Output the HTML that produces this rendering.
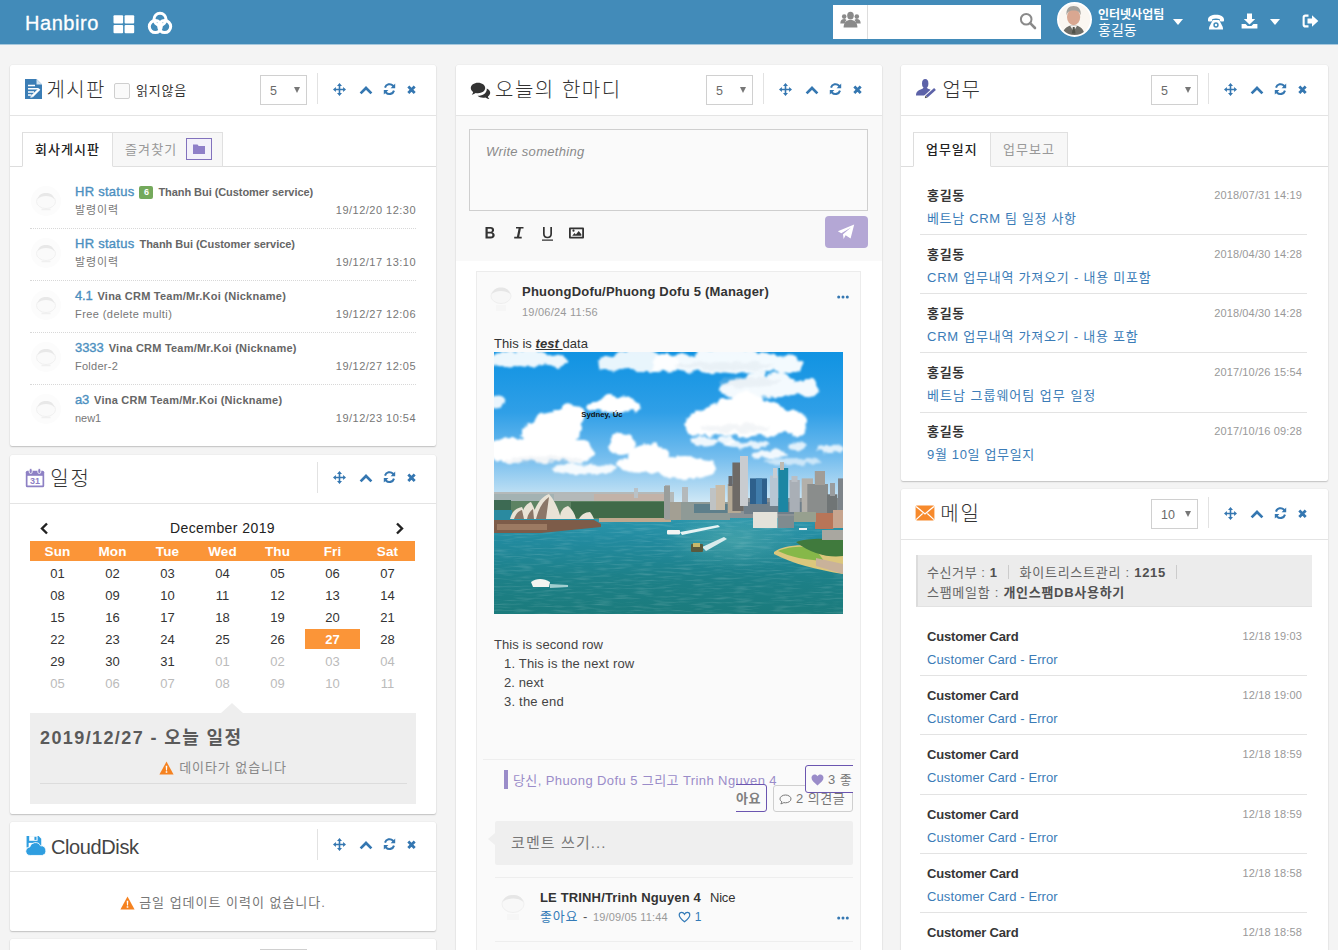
<!DOCTYPE html>
<html lang="ko">
<head>
<meta charset="utf-8">
<title>Hanbiro</title>
<style>
*{box-sizing:border-box;margin:0;padding:0}
html,body{width:1338px;height:950px;overflow:hidden;background:#f4f4f4}
body{font-family:"Liberation Sans","Noto Sans CJK KR",sans-serif;font-size:13px;color:#333;position:relative}
svg{display:block}
.abs{position:absolute}
#hdr{position:absolute;left:0;top:0;width:1338px;height:45px;background:#428bb9;border-bottom:1px solid #a6c8dd}
#hdr .brand{position:absolute;left:25px;top:10px;font-size:20px;color:#fff;letter-spacing:.55px;line-height:26px;-webkit-text-stroke:.3px #fff}
.card{position:absolute;background:#fff;border-radius:2px;box-shadow:0 1px 1.500px rgba(0,0,0,.2),0 0 0 .5px rgba(0,0,0,.03);overflow:hidden}
.chead{position:absolute;left:0;top:0;right:0;height:51px;border-bottom:1px solid #e4e4e4}
.ctitle{position:absolute;left:38px;top:9px;font-size:20px;line-height:30px;font-weight:300;color:#333;white-space:nowrap}
.sel{position:absolute;left:250px;top:10px;width:47px;height:30px;border:1px solid #d0d0d0;background:#fff;font-size:12.500px;color:#6a6a6a;line-height:31px;padding-left:9px}
.sel:after{content:"";position:absolute;right:6px;top:11px;border:3.500px solid transparent;border-top:6px solid #777;border-bottom:0}
.vdiv{position:absolute;left:307px;top:8px;width:1px;height:31px;background:#e2e2e2}
.tools{position:absolute;left:321px;top:17px}
.tabs{position:absolute;left:12px;top:67px;height:35px;display:flex}
.tabline{position:absolute;left:0;right:0;top:101px;height:1px;background:#ddd}
.tab{height:35px;border:1px solid #e0e0e0;border-left:0;background:#f7f7f7;color:#999;font-size:13px;line-height:33px;padding:0 12px;white-space:nowrap;position:relative}
.tab:first-child{border-left:1px solid #ddd}
.tab.on{background:#fff;color:#222;border-bottom-color:#fff;font-weight:500;z-index:2}
.av{position:absolute;left:1px;top:9px}
.brow{position:absolute;left:20px;width:386px;height:52px;border-bottom:1px dotted #d8d8d8}
.brow:last-child{border-bottom:0}
.bt{position:absolute;left:45px;top:6px;white-space:nowrap;line-height:18px}
.btt{font-size:13px;color:#4b8fc0;font-weight:400;-webkit-text-stroke:.35px #4b8fc0}
.bn{font-size:11px;font-weight:700;color:#666;margin-left:5px}
.bdg{display:inline-block;background:#74a95c;color:#fff;font-size:9px;font-weight:700;line-height:13px;height:13px;min-width:14px;text-align:center;border-radius:2px;margin-left:5px;vertical-align:1px}
.bs{position:absolute;left:45px;top:25px;font-size:11px;color:#777;line-height:16px;white-space:nowrap}
.bd{position:absolute;right:0;top:25px;font-size:11px;color:#777;line-height:16px;font-weight:500}
.fbtn{position:absolute;right:10px;top:5px;width:26px;height:22px;border:1px solid #8272bd;background:#f3f1fa;display:flex;align-items:center;justify-content:center}
.calttl{font-size:14px;line-height:18px;font-weight:500;color:#222;letter-spacing:.2px}
.cth{position:absolute;top:22px;width:55px;height:20px;line-height:22px;text-align:center;color:#fff;font-weight:700;font-size:13.500px;letter-spacing:.1px}
.cd{position:absolute;width:55px;height:20px;line-height:22px;text-align:center;font-size:13px;color:#333}
.cd.off{color:#bbb}
.cd.cur{background:#fb9538;color:#fff;font-weight:700}
.wi{position:absolute;left:19px;width:388px;height:59px;margin-top:.7px}
.wn{position:absolute;left:7px;top:10px;font-size:13px;line-height:20px;font-weight:700;color:#363636;white-space:nowrap}
.wd{position:absolute;right:6px;top:9px;font-size:11px;line-height:20px;color:#999;white-space:nowrap}
.wl{position:absolute;left:7px;top:33px;font-size:13px;line-height:20px;color:#3b7cb7;white-space:nowrap}
.wsep{position:absolute;left:19px;width:387px;height:1px;background:#e3e3e3}
.minfo{font-size:13px;line-height:18px;color:#666;white-space:nowrap}
.minfo b{color:#505050}
.msep{display:inline-block;width:1px;height:14px;background:#ccc;margin:0 11px 0 10px;vertical-align:-2px}
.ptxt{font-size:13px;line-height:20px;color:#444;white-space:nowrap;letter-spacing:.25px}

</style>
</head>
<body>
<div id="hdr">
  <div class="brand">Hanbiro</div>
  <svg class="abs" style="left:113px;top:15px" width="22" height="19" viewBox="0 0 22 19"><g fill="#fff"><rect x="0.5" y="0.3" width="9.6" height="8.2" rx="1"/><rect x="11.6" y="0.3" width="9.6" height="8.2" rx="1"/><rect x="0.5" y="10" width="9.6" height="8.2" rx="1"/><rect x="11.6" y="10" width="9.6" height="8.2" rx="1"/></g></svg>
  <svg class="abs" style="left:147px;top:11px" width="26" height="24" viewBox="0 0 26 24"><g fill="none" stroke="#fff" stroke-width="3"><circle cx="13" cy="8.2" r="6"/><circle cx="8.3" cy="15.6" r="6"/><circle cx="17.7" cy="15.6" r="6"/></g></svg>
  <div class="abs" style="left:833px;top:5px;width:208px;height:34px;background:#fff"></div>
  <div class="abs" style="left:867px;top:5px;width:1px;height:34px;background:#ddd"></div>
  <svg class="abs" style="left:840px;top:11px" width="21" height="17" viewBox="0 0 21 17"><g fill="#8a8a8a"><circle cx="4.2" cy="5.6" r="2.3"/><path d="M0.3 12.5c0-3 1.6-4.4 3.9-4.4 1 0 1.8.3 2.4.8-1 .9-1.6 2.2-1.8 3.6z"/><circle cx="16.8" cy="5.6" r="2.3"/><path d="M20.7 12.5c0-3-1.6-4.4-3.9-4.400-1 0-1.800.3-2.400.8 1 .9 1.600 2.200 1.800 3.600z"/><ellipse cx="10.500" cy="4.600" rx="3.300" ry="3.900"/><path d="M3.600 16.500c0-5 2.800-7.400 6.900-7.400s6.900 2.400 6.900 7.400z"/></g></svg>
  <svg class="abs" style="left:1019px;top:12px" width="18" height="18" viewBox="0 0 18 18"><circle cx="7.200" cy="7.200" r="5.300" fill="none" stroke="#8a8a8a" stroke-width="2"/><path d="M11.200 11.200L16 16" stroke="#8a8a8a" stroke-width="2.600" stroke-linecap="round"/></svg>
  <div class="abs" id="avatar" style="left:1057px;top:2px;width:35px;height:35px;border-radius:50%;border:2px solid #fff;background:#f8f4ee;overflow:hidden">
    <svg width="31" height="31" viewBox="0 0 31 31"><rect width="31" height="31" fill="#faf6f1"/><path d="M3.500 31c.5-5.500 4-8.500 8-9.500h6c4 1 7.500 4 8 9.500z" fill="#6f6e68"/><path d="M11 21.500l3.600 6 3.600-6z" fill="#f4f0ee"/><path d="M13.800 23h1.800l.9 6.500h-3.600z" fill="#50524a"/><ellipse cx="14.600" cy="13" rx="6.600" ry="8.300" fill="#d9a791"/><path d="M7.600 11.500c-.9-6.500 2.400-9.500 7-9.500s7.900 3 7 9.500c-.8-3.300-2.300-5-7-5s-6.200 1.700-7 5z" fill="#a3a19c"/></svg>
  </div>
  <div class="abs" style="left:1098px;top:8px;font-size:12px;line-height:15px;font-weight:700;color:#fff;white-space:nowrap">인터넷사업팀</div>
  <div class="abs" style="left:1098px;top:21px;font-size:14px;line-height:18px;font-weight:400;color:#fff;white-space:nowrap">홍길동</div>
  <div class="abs" style="left:1173px;top:19px;border:5px solid transparent;border-top:6px solid #fff;border-bottom:0"></div>
  <svg class="abs" style="left:1207px;top:14px" width="18" height="16" viewBox="0 0 18 16"><g fill="#fff"><path d="M1 5.500C1 2.500 4.500.8 9 .8s8 1.700 8 4.700v1.200c0 .5-.4.800-.9.800h-2.300c-.5 0-.9-.3-.9-.8V5.200C11.800 4.800 10.500 4.600 9 4.600s-2.800.2-3.900.6v1.500c0 .5-.4.800-.9.800H1.900c-.5 0-.9-.3-.9-.8z"/><path d="M5.800 6h6.400l3.300 6.500c.4.800.5 1.500.5 2.500v.5H2V15c0-1 .1-1.700.5-2.500z"/></g><circle cx="9" cy="11" r="2.700" fill="#428bb9"/><circle cx="9" cy="11" r="1.200" fill="#fff"/></svg>
  <svg class="abs" style="left:1241px;top:13px" width="17" height="16" viewBox="0 0 17 16"><g fill="#fff"><path d="M6 .5h5v5.500h3.200L8.500 11.500 2.800 6H6z"/><path d="M.6 11h4l2 2h3.800l2-2h4v4.500H.6z"/></g></svg>
  <div class="abs" style="left:1270px;top:19px;border:5px solid transparent;border-top:6px solid #fff;border-bottom:0"></div>
  <svg class="abs" style="left:1302px;top:13px" width="17" height="16" viewBox="0 0 17 16"><g fill="#fff"><path d="M6.500 1.500v2.200H3.700c-.6 0-1 .4-1 1v6.600c0 .6.400 1 1 1h2.800v2.200H3.200C1.700 14.500.6 13.400.6 11.900V4.100C.6 2.600 1.700 1.500 3.200 1.500z"/><path d="M10 2.300L16.300 8 10 13.700V10.400H5.500V5.600H10z"/></g></svg>
</div>
<div class="card" style="left:10px;top:65px;width:426px;height:381px">
<div class="chead" style="height:51px"><svg class="abs" style="left:15px;top:14px" width="17" height="20" viewBox="0 0 17 20"><path d="M0 0h11.500L17 5.500V20H0z" fill="#3b7db5"/><path d="M11.500 0v5.500H17z" fill="#d4e3f0"/><g stroke="#fff" stroke-width="1.500" fill="none"><path d="M3 6.500h7M3 9.700h10.500M3 12.900h6M3 16.100h3.500"/><path d="M7 17.300l7.500-7.300" stroke-width="2.400"/></g><path d="M5.300 18.800l.6-2.400 1.800 1.800z" fill="#fff"/></svg><div class="ctitle" style="left:36.6px;top:10px;"><span id="t_ttlA" style="letter-spacing:1.250px;">게시판</span></div><div class="abs" style="left:104px;top:18px;width:16px;height:16px;border:1px solid #cfcfcf;background:#fafafa;border-radius:2px"></div><div class="abs" style="left:126px;top:16px;font-size:13px;line-height:20px;color:#333;white-space:nowrap"><span id="t_unread" style="letter-spacing:0.785px;">읽지않음</span></div><div class="sel">5</div><div class="vdiv" style="top:8px"></div><svg class="abs" style="left:321px;top:17px" width="100" height="18" viewBox="0 0 100 18"><g fill="#3577b1" stroke="none">
<path d="M8.500 1l2.500 2.900H9.300v2.800h2.800V5l2.900 2.500-2.900 2.500V8.300H9.300v2.800H11l-2.500 2.900L6 11.100h1.700V8.300H4.900V10L2 7.500 4.900 5v1.700h2.800V3.900H6z"/>
<path d="M29.600 11.400L35 6l5.400 5.400" fill="none" stroke="#3577b1" stroke-width="2.700"/>
<path d="M64.200 1.600v4.600h-4.600l1.700-1.700a3.700 3.700 0 0 0-6.300 1.400l-2-.6a5.800 5.800 0 0 1 9.800-2.300zM52.800 12.600V8h4.600l-1.700 1.700a3.700 3.700 0 0 0 6.300-1.400l2 .6a5.800 5.800 0 0 1-9.800 2.300z"/>
<path d="M77.300 4.600l6.400 6.400M83.700 4.600l-6.400 6.400" fill="none" stroke="#3577b1" stroke-width="2.800"/>
</g></svg></div>
<div class="tabline"></div>
<div class="tabs"><div class="tab on" style="width:91px"><span id="t_tabA1" style="letter-spacing:1.047px;">회사게시판</span></div><div class="tab" style="width:110px"><span id="t_tabA2" style="letter-spacing:1.116px;">즐겨찾기</span><span class="fbtn"><svg width="14" height="12" viewBox="0 0 14 12"><path d="M1 1.500h4.500l1.200 1.500H13v8H1z" fill="#8f7fc8"/></svg></span></div></div>
<div class="brow" style="top:112px"><svg class="av" width="30" height="30" viewBox="0 0 30 30"><circle cx="15" cy="15" r="15" fill="#fcfcfc"/><ellipse cx="15" cy="15.500" rx="9.500" ry="7" fill="#fafafa" stroke="#f1f1f1" stroke-width="1"/><path d="M6.500 13c1.500-4.500 4.500-6 8.500-6s7 1.500 8.500 6c-2.500-2-5-3-8.500-3s-6 1-8.500 3z" fill="#e8e8e8"/><path d="M10.500 23.500h9" stroke="#f0f0f0" stroke-width="1.500"/></svg><div class="bt"><span class="btt"><span id="t_bt0" style="letter-spacing:0.265px;">HR status</span></span><span class="bdg">6</span><span class="bn"><span id="t_bn0" style="letter-spacing:-0.066px;">Thanh Bui (Customer service)</span></span></div><div class="bs"><span id="t_bs0" style="letter-spacing:0.902px;">발령이력</span></div><div class="bd"><span id="t_bd0" style="letter-spacing:0.484px;">19/12/20 12:30</span></div></div><div class="brow" style="top:164px"><svg class="av" width="30" height="30" viewBox="0 0 30 30"><circle cx="15" cy="15" r="15" fill="#fcfcfc"/><ellipse cx="15" cy="15.500" rx="9.500" ry="7" fill="#fafafa" stroke="#f1f1f1" stroke-width="1"/><path d="M6.500 13c1.500-4.500 4.500-6 8.500-6s7 1.500 8.500 6c-2.500-2-5-3-8.500-3s-6 1-8.500 3z" fill="#e8e8e8"/><path d="M10.500 23.500h9" stroke="#f0f0f0" stroke-width="1.500"/></svg><div class="bt"><span class="btt"><span id="t_bt1" style="letter-spacing:0.265px;">HR status</span></span><span class="bn"><span id="t_bn1" style="letter-spacing:-0.036px;">Thanh Bui (Customer service)</span></span></div><div class="bs"><span id="t_bs1" style="letter-spacing:0.902px;">발령이력</span></div><div class="bd"><span id="t_bd1" style="letter-spacing:0.484px;">19/12/17 13:10</span></div></div><div class="brow" style="top:216px"><svg class="av" width="30" height="30" viewBox="0 0 30 30"><circle cx="15" cy="15" r="15" fill="#fcfcfc"/><ellipse cx="15" cy="15.500" rx="9.500" ry="7" fill="#fafafa" stroke="#f1f1f1" stroke-width="1"/><path d="M6.500 13c1.500-4.500 4.500-6 8.500-6s7 1.500 8.500 6c-2.500-2-5-3-8.500-3s-6 1-8.500 3z" fill="#e8e8e8"/><path d="M10.500 23.500h9" stroke="#f0f0f0" stroke-width="1.500"/></svg><div class="bt"><span class="btt"><span id="t_bt2" style="letter-spacing:-0.200px;">4.1</span></span><span class="bn"><span id="t_bn2" style="letter-spacing:0.239px;">Vina CRM Team/Mr.Koi (Nickname)</span></span></div><div class="bs"><span id="t_bs2" style="letter-spacing:0.419px;">Free (delete multi)</span></div><div class="bd"><span id="t_bd2" style="letter-spacing:0.484px;">19/12/27 12:06</span></div></div><div class="brow" style="top:268px"><svg class="av" width="30" height="30" viewBox="0 0 30 30"><circle cx="15" cy="15" r="15" fill="#fcfcfc"/><ellipse cx="15" cy="15.500" rx="9.500" ry="7" fill="#fafafa" stroke="#f1f1f1" stroke-width="1"/><path d="M6.500 13c1.500-4.500 4.500-6 8.500-6s7 1.500 8.500 6c-2.500-2-5-3-8.500-3s-6 1-8.500 3z" fill="#e8e8e8"/><path d="M10.500 23.500h9" stroke="#f0f0f0" stroke-width="1.500"/></svg><div class="bt"><span class="btt"><span id="t_bt3" style="letter-spacing:-0.043px;">3333</span></span><span class="bn"><span id="t_bn3" style="letter-spacing:0.218px;">Vina CRM Team/Mr.Koi (Nickname)</span></span></div><div class="bs"><span id="t_bs3" style="letter-spacing:0.262px;">Folder-2</span></div><div class="bd"><span id="t_bd3" style="letter-spacing:0.484px;">19/12/27 12:05</span></div></div><div class="brow" style="top:320px"><svg class="av" width="30" height="30" viewBox="0 0 30 30"><circle cx="15" cy="15" r="15" fill="#fcfcfc"/><ellipse cx="15" cy="15.500" rx="9.500" ry="7" fill="#fafafa" stroke="#f1f1f1" stroke-width="1"/><path d="M6.500 13c1.500-4.500 4.500-6 8.500-6s7 1.500 8.500 6c-2.500-2-5-3-8.500-3s-6 1-8.500 3z" fill="#e8e8e8"/><path d="M10.500 23.500h9" stroke="#f0f0f0" stroke-width="1.500"/></svg><div class="bt"><span class="btt"><span id="t_bt4" style="letter-spacing:-0.200px;">a3</span></span><span class="bn"><span id="t_bn4" style="letter-spacing:0.229px;">Vina CRM Team/Mr.Koi (Nickname)</span></span></div><div class="bs"><span id="t_bs4" style="letter-spacing:-0.037px;">new1</span></div><div class="bd"><span id="t_bd4" style="letter-spacing:0.484px;">19/12/23 10:54</span></div></div>
</div>
<div class="card" style="left:10px;top:455px;width:426px;height:359px">
<div class="chead" style="height:49px"><svg class="abs" style="left:15px;top:13px" width="20" height="20" viewBox="0 0 20 20"><rect x=".8" y="2.800" width="18.400" height="16.400" rx="1.500" fill="#8d80c4"/><rect x="2.500" y="7.800" width="15" height="9.700" fill="#fff"/><rect x="4.200" y=".5" width="3" height="5" rx="1.500" fill="#8d80c4" stroke="#fff" stroke-width=".8"/><rect x="12.800" y=".5" width="3" height="5" rx="1.500" fill="#8d80c4" stroke="#fff" stroke-width=".8"/><text x="10" y="16.200" font-size="9" font-weight="700" fill="#8d80c4" text-anchor="middle" font-family="Liberation Sans, sans-serif">31</text></svg><div class="ctitle" style="left:40.3px;top:9px;"><span id="t_ttlB" style="letter-spacing:1.700px;">일정</span></div><div class="vdiv" style="top:7px"></div><svg class="abs" style="left:321px;top:15px" width="100" height="18" viewBox="0 0 100 18"><g fill="#3577b1" stroke="none">
<path d="M8.500 1l2.500 2.900H9.300v2.800h2.800V5l2.900 2.500-2.900 2.500V8.300H9.300v2.800H11l-2.500 2.900L6 11.100h1.700V8.300H4.900V10L2 7.500 4.900 5v1.700h2.800V3.900H6z"/>
<path d="M29.600 11.400L35 6l5.400 5.400" fill="none" stroke="#3577b1" stroke-width="2.700"/>
<path d="M64.200 1.600v4.600h-4.600l1.700-1.700a3.700 3.700 0 0 0-6.300 1.400l-2-.6a5.800 5.800 0 0 1 9.800-2.300zM52.800 12.600V8h4.600l-1.700 1.700a3.700 3.700 0 0 0 6.300-1.400l2 .6a5.800 5.800 0 0 1-9.800 2.300z"/>
<path d="M77.300 4.600l6.400 6.400M83.700 4.600l-6.400 6.400" fill="none" stroke="#3577b1" stroke-width="2.800"/>
</g></svg></div>
<div class="abs" style="left:20px;top:64px;width:385px;height:200px">
<svg class="abs" style="left:9px;top:3px" width="10" height="13" viewBox="0 0 10 13"><path d="M8 1.500L3 6.500l5 5" fill="none" stroke="#222" stroke-width="2.400"/></svg>
<svg class="abs" style="left:365px;top:3px" width="10" height="13" viewBox="0 0 10 13"><path d="M2 1.500l5 5-5 5" fill="none" stroke="#222" stroke-width="2.400"/></svg>
<div class="abs calttl" style="left:0;top:0;width:385px;text-align:center"><span id="t_calttl" style="letter-spacing:0.423px;">December 2019</span></div>
<div class="abs" style="left:0;top:22px;width:385px;height:20px;background:#fb9538"></div>
<div class="cth" style="left:0px">Sun</div><div class="cth" style="left:55px">Mon</div><div class="cth" style="left:110px">Tue</div><div class="cth" style="left:165px">Wed</div><div class="cth" style="left:220px">Thu</div><div class="cth" style="left:275px">Fri</div><div class="cth" style="left:330px">Sat</div>
<div class="cd" style="left:0px;top:44px">01</div><div class="cd" style="left:55px;top:44px">02</div><div class="cd" style="left:110px;top:44px">03</div><div class="cd" style="left:165px;top:44px">04</div><div class="cd" style="left:220px;top:44px">05</div><div class="cd" style="left:275px;top:44px">06</div><div class="cd" style="left:330px;top:44px">07</div><div class="cd" style="left:0px;top:66px">08</div><div class="cd" style="left:55px;top:66px">09</div><div class="cd" style="left:110px;top:66px">10</div><div class="cd" style="left:165px;top:66px">11</div><div class="cd" style="left:220px;top:66px">12</div><div class="cd" style="left:275px;top:66px">13</div><div class="cd" style="left:330px;top:66px">14</div><div class="cd" style="left:0px;top:88px">15</div><div class="cd" style="left:55px;top:88px">16</div><div class="cd" style="left:110px;top:88px">17</div><div class="cd" style="left:165px;top:88px">18</div><div class="cd" style="left:220px;top:88px">19</div><div class="cd" style="left:275px;top:88px">20</div><div class="cd" style="left:330px;top:88px">21</div><div class="cd" style="left:0px;top:110px">22</div><div class="cd" style="left:55px;top:110px">23</div><div class="cd" style="left:110px;top:110px">24</div><div class="cd" style="left:165px;top:110px">25</div><div class="cd" style="left:220px;top:110px">26</div><div class="cd cur" style="left:275px;top:110px">27</div><div class="cd" style="left:330px;top:110px">28</div><div class="cd" style="left:0px;top:132px">29</div><div class="cd" style="left:55px;top:132px">30</div><div class="cd" style="left:110px;top:132px">31</div><div class="cd off" style="left:165px;top:132px">01</div><div class="cd off" style="left:220px;top:132px">02</div><div class="cd off" style="left:275px;top:132px">03</div><div class="cd off" style="left:330px;top:132px">04</div><div class="cd off" style="left:0px;top:154px">05</div><div class="cd off" style="left:55px;top:154px">06</div><div class="cd off" style="left:110px;top:154px">07</div><div class="cd off" style="left:165px;top:154px">08</div><div class="cd off" style="left:220px;top:154px">09</div><div class="cd off" style="left:275px;top:154px">10</div><div class="cd off" style="left:330px;top:154px">11</div>
</div>
<svg class="abs" style="left:210px;top:248px" width="24" height="11" viewBox="0 0 24 11"><path d="M0 11L12 0l12 11z" fill="#eee"/></svg>
<div class="abs" style="left:20px;top:258px;width:386px;height:91px;background:#eee">
<div class="abs" style="left:10px;top:11px;font-size:18px;line-height:28px;font-weight:700;color:#5a5a5a;white-space:nowrap"><span id="t_caltoday" style="letter-spacing:1.400px;">2019/12/27 - 오늘 일정</span></div>
<div class="abs" style="left:0;top:45px;width:386px;text-align:center;font-size:13px;line-height:20px;color:#888;white-space:nowrap"><svg style="display:inline-block;vertical-align:-3px;margin-right:5px" width="15" height="14" viewBox="0 0 15 14"><path d="M7.500.6L14.600 13.400H.4z" fill="#f58220"/><path d="M6.700 4.800h1.600l-.3 4.700H7zM6.700 10.300h1.600v1.500H6.700z" fill="#fff"/></svg><span id="t_nodata" style="letter-spacing:0.925px;">데이타가 없습니다</span></div>
<div class="abs" style="left:10px;top:70px;width:367px;height:1px;background:#dcdcdc"></div>
</div>
</div>
<div class="card" style="left:10px;top:822px;width:426px;height:109px">
<div class="chead" style="height:50px"><svg class="abs" style="left:15px;top:13px" width="22" height="21" viewBox="0 0 21 20"><path d="M1.500 1h11.500l2.500 2.500V12H1.500z" fill="#2f9ee0"/><rect x="4" y="1" width="8" height="4.500" fill="#fff"/><rect x="9" y="1.700" width="2" height="3" fill="#2f9ee0"/><rect x="3.500" y="7.500" width="10" height="5" fill="#fff"/><path d="M5 19.500a4 4 0 0 1-.5-8 5.500 5.500 0 0 1 10.300-1.200 4.700 4.700 0 0 1 1.700 9.200z" fill="#2f9ee0" stroke="#fff" stroke-width=".8"/></svg><div class="ctitle" style="left:41px;top:9px;font-size:20px;color:#444;top:10px"><span id="t_ttlC" style="letter-spacing:-0.390px;">CloudDisk</span></div><div class="vdiv" style="top:7px"></div><svg class="abs" style="left:321px;top:15px" width="100" height="18" viewBox="0 0 100 18"><g fill="#3577b1" stroke="none">
<path d="M8.500 1l2.500 2.900H9.300v2.800h2.800V5l2.900 2.500-2.900 2.500V8.300H9.300v2.800H11l-2.500 2.900L6 11.100h1.700V8.300H4.900V10L2 7.500 4.900 5v1.700h2.800V3.900H6z"/>
<path d="M29.600 11.400L35 6l5.400 5.400" fill="none" stroke="#3577b1" stroke-width="2.700"/>
<path d="M64.200 1.600v4.600h-4.600l1.700-1.700a3.700 3.700 0 0 0-6.300 1.400l-2-.6a5.800 5.800 0 0 1 9.800-2.300zM52.800 12.600V8h4.600l-1.700 1.700a3.700 3.700 0 0 0 6.300-1.400l2 .6a5.800 5.800 0 0 1-9.800 2.300z"/>
<path d="M77.300 4.600l6.400 6.400M83.700 4.600l-6.400 6.400" fill="none" stroke="#3577b1" stroke-width="2.800"/>
</g></svg></div>
<div class="abs" style="left:0;top:71px;width:426px;text-align:center;font-size:13px;line-height:20px;color:#777;white-space:nowrap"><svg style="display:inline-block;vertical-align:-3px;margin-right:4px" width="15" height="14" viewBox="0 0 15 14"><path d="M7.500.6L14.600 13.400H.4z" fill="#f58220"/><path d="M6.700 4.800h1.600l-.3 4.700H7zM6.700 10.300h1.600v1.500H6.700z" fill="#fff"/></svg><span id="t_noupd" style="letter-spacing:0.985px;">금일 업데이트 이력이 없습니다.</span></div>
</div>
<div class="card" style="left:10px;top:939px;width:426px;height:60px"><div class="sel"></div></div>
<div class="card" style="left:456px;top:65px;width:425.500px;height:900px">
<div class="chead" style="height:51px"><svg class="abs" style="left:14px;top:17px" width="21" height="18" viewBox="0 0 21 18"><path d="M8 .8c4 0 7.200 2.300 7.200 5.200S12 11.200 8 11.200c-.8 0-1.600-.1-2.300-.3-1 .9-2.500 1.500-4 1.600.8-.7 1.300-1.600 1.500-2.600C1.800 9 .8 7.600.8 6 .8 3.100 4 .8 8 .8z" fill="#333"/><path d="M16.700 6.500c2 .8 3.500 2.400 3.500 4.300 0 1.500-.9 2.800-2.300 3.700.2 1 .7 1.900 1.500 2.600-1.500-.1-3-.7-4-1.600-.7.200-1.500.3-2.300.3-2.300 0-4.300-.8-5.600-2 .2 0 .4 0 .6 0 4.800 0 8.700-2.900 8.700-6.600 0-.2 0-.5-.1-.7z" fill="#333"/></svg><div class="ctitle" style="left:39px;top:10px;"><span id="t_ttlT" style="letter-spacing:1.530px;">오늘의 한마디</span></div><div class="sel">5</div><div class="vdiv" style="top:8px"></div><svg class="abs" style="left:321px;top:17px" width="100" height="18" viewBox="0 0 100 18"><g fill="#3577b1" stroke="none">
<path d="M8.500 1l2.500 2.900H9.300v2.800h2.800V5l2.900 2.500-2.900 2.500V8.300H9.300v2.800H11l-2.500 2.900L6 11.100h1.700V8.300H4.900V10L2 7.500 4.900 5v1.700h2.800V3.900H6z"/>
<path d="M29.600 11.400L35 6l5.400 5.400" fill="none" stroke="#3577b1" stroke-width="2.700"/>
<path d="M64.200 1.600v4.600h-4.600l1.700-1.700a3.700 3.700 0 0 0-6.300 1.400l-2-.6a5.800 5.800 0 0 1 9.800-2.300zM52.800 12.600V8h4.600l-1.700 1.700a3.700 3.700 0 0 0 6.300-1.400l2 .6a5.800 5.800 0 0 1-9.800 2.300z"/>
<path d="M77.300 4.600l6.400 6.400M83.700 4.600l-6.400 6.400" fill="none" stroke="#3577b1" stroke-width="2.800"/>
</g></svg></div>
<div class="abs" style="left:0;top:51px;width:426px;height:145px;background:#f9f9f9"></div>
<div class="abs" style="left:13px;top:64px;width:399px;height:82px;border:1px solid #cfcfcf;background:#fafafa"></div>
<div class="abs" style="left:30px;top:78px;font-size:13px;line-height:18px;font-style:italic;color:#8a8a8a;white-space:nowrap;letter-spacing:.15px"><span id="t_ws" style="letter-spacing:0.312px;">Write something</span></div>
<svg class="abs" style="left:28px;top:161px" width="100" height="15" viewBox="0 0 100 15"><g fill="#333">
<path d="M1.500 1h5c2.300 0 3.600 1.100 3.600 2.900 0 1.200-.6 2.100-1.700 2.500 1.400.3 2.300 1.300 2.300 2.800 0 2-1.500 3.200-3.900 3.200H1.500zm2.200 1.800v2.900h2.500c1.100 0 1.700-.5 1.700-1.500s-.6-1.400-1.700-1.400zm0 4.600v3.200h2.800c1.200 0 1.900-.6 1.900-1.600s-.7-1.600-1.900-1.600z"/>
<path d="M32 1h7.500v1.600h-2.600l-1.700 8.200h2.500v1.600h-7.500v-1.600h2.700l1.700-8.200H32z"/>
<path d="M59 1h1.700v6.800c0 1.900 1 2.900 2.800 2.900s2.800-1 2.800-2.900V1H68v6.900c0 2.800-1.700 4.400-4.500 4.400S59 10.700 59 7.900zM58 13.500h11v1.200H58z"/>
<path d="M86 1.500h13c.5 0 1 .5 1 1v9c0 .5-.5 1-1 1H86c-.5 0-1-.5-1-1v-9c0-.5.5-1 1-1zm.8 1.800v7.400h11.400V3.300zm1.400 6.400l2.300-2.600 1.400 1.400 2.800-3.500 2.600 3.300v1.400zm1.300-3.900a1.100 1.100 0 1 1 0-2.200 1.100 1.100 0 0 1 0 2.200z"/>
</g></svg>
<div class="abs" style="left:369px;top:151px;width:43px;height:32px;background:#b4a7d5;border-radius:4px"><svg class="abs" style="left:12px;top:8px" width="18" height="16" viewBox="0 0 18 16"><path d="M17.200.5L13.600 14.500 8.600 11.300 6.600 15 6 10.200 14 3.500 4.300 9.200.8 7.300z" fill="#fff"/></svg></div>
<div class="abs" style="left:20px;top:206px;width:385px;height:760px;border:1px solid #ececec;background:#fafafa">
<svg class="abs" style="left:12px;top:13px" width="24" height="32" viewBox="0 0 24 32"><ellipse cx="12" cy="11" rx="10" ry="7.500" fill="#f7f7f7" stroke="#efefef"/><path d="M2.500 9c2-5 5.500-6.500 9.500-6.500S19.500 4 21.500 9c-3-2-6-3-9.500-3s-6.500 1-9.500 3z" fill="#e6e6e6"/><rect x="7" y="20" width="10" height="6" fill="#f6f6f6"/></svg>
<div class="abs" style="left:45px;top:10px;font-size:13px;line-height:20px;font-weight:700;color:#333;white-space:nowrap;letter-spacing:.25px"><span id="t_pname" style="letter-spacing:0.211px;">PhuongDofu/Phuong Dofu 5 (Manager)</span></div>
<div class="abs" style="left:45px;top:31px;font-size:11px;line-height:18px;color:#999;white-space:nowrap"><span id="t_pdate" style="letter-spacing:0.239px;">19/06/24 11:56</span></div>
<svg class="abs" style="left:360px;top:23px" width="12" height="4" viewBox="0 0 12 4"><g fill="#3577b1"><circle cx="1.700" cy="2" r="1.500"/><circle cx="6" cy="2" r="1.500"/><circle cx="10.300" cy="2" r="1.500"/></g></svg>
<div class="abs" style="left:17px;top:62px;font-size:13px;line-height:20px;color:#333;white-space:nowrap;letter-spacing:.2px"><span id="t_ptest" style="letter-spacing:0.048px;">This is <i style="font-weight:700;text-decoration:underline">test </i>data</span></div>
<svg class="abs" style="left:17px;top:80px" width="349" height="262" viewBox="0 0 349 262">
<defs>
<linearGradient id="sky" x1="0" y1="0" x2="0" y2="1"><stop offset="0" stop-color="#1093e2"/><stop offset=".4" stop-color="#2f9fe7"/><stop offset=".7" stop-color="#74bdee"/><stop offset=".92" stop-color="#b7dcf3"/><stop offset="1" stop-color="#cfe8f6"/></linearGradient>
<linearGradient id="sea" x1="0" y1="0" x2="0" y2="1"><stop offset="0" stop-color="#2e9ab2"/><stop offset=".3" stop-color="#228a9e"/><stop offset=".65" stop-color="#1d8088"/><stop offset="1" stop-color="#1b7b7c"/></linearGradient>
<radialGradient id="glow" cx=".5" cy=".5" r=".5"><stop offset="0" stop-color="#5fb3b0" stop-opacity=".5"/><stop offset="1" stop-color="#5fb3b0" stop-opacity="0"/></radialGradient>
<filter id="bl" x="-10%" y="-10%" width="120%" height="120%"><feTurbulence type="fractalNoise" baseFrequency=".09" numOctaves="3" seed="4" result="n"/><feDisplacementMap in="SourceGraphic" in2="n" scale="9" xChannelSelector="R" yChannelSelector="G" result="d"/><feGaussianBlur in="d" stdDeviation="1.300"/></filter><filter id="wt" x="0" y="0" width="100%" height="100%"><feTurbulence type="fractalNoise" baseFrequency=".05 .5" numOctaves="2" seed="2"/><feColorMatrix type="matrix" values="0 0 0 0 1  0 0 0 0 1  0 0 0 0 1  .9 0 0 0 -.42"/></filter>
<filter id="bl2"><feGaussianBlur stdDeviation=".6"/></filter>
</defs>
<rect width="349" height="150" fill="url(#sky)"/>
<g fill="#fff" filter="url(#bl)"><g opacity="0.92"><ellipse cx="0.5" cy="9.0" rx="13.0" ry="5.6"/><ellipse cx="13.2" cy="7.2" rx="13.0" ry="7.6"/><ellipse cx="32.4" cy="5.0" rx="13.0" ry="10.0"/><ellipse cx="41.3" cy="7.2" rx="13.0" ry="7.6"/><ellipse cx="60.1" cy="9.0" rx="13.0" ry="5.6"/><ellipse cx="31.0" cy="9.6" rx="33.1" ry="4.8"/></g><g opacity="0.9"><ellipse cx="117.6" cy="11.4" rx="12.2" ry="7.3"/><ellipse cx="128.4" cy="9.1" rx="12.2" ry="9.9"/><ellipse cx="146.1" cy="6.3" rx="14.3" ry="13.0"/><ellipse cx="155.4" cy="9.1" rx="12.2" ry="9.9"/><ellipse cx="172.6" cy="11.4" rx="12.2" ry="7.3"/><ellipse cx="146.0" cy="12.3" rx="31.3" ry="6.2"/></g><g opacity="0.95"><ellipse cx="174.0" cy="12.4" rx="16.7" ry="8.4"/><ellipse cx="192.8" cy="11.1" rx="16.7" ry="9.9"/><ellipse cx="215.5" cy="8.8" rx="16.7" ry="12.4"/><ellipse cx="239.0" cy="6.5" rx="16.7" ry="15.0"/><ellipse cx="248.9" cy="8.8" rx="16.7" ry="12.4"/><ellipse cx="268.7" cy="11.1" rx="16.7" ry="9.9"/><ellipse cx="292.3" cy="12.4" rx="16.7" ry="8.4"/><ellipse cx="235.0" cy="13.4" rx="59.8" ry="7.2"/></g><g opacity="0.95"><ellipse cx="238.0" cy="36.9" rx="13.5" ry="7.8"/><ellipse cx="249.3" cy="35.2" rx="13.5" ry="9.8"/><ellipse cx="262.5" cy="32.7" rx="13.9" ry="12.6"/><ellipse cx="283.3" cy="32.7" rx="13.9" ry="12.6"/><ellipse cx="289.0" cy="35.2" rx="13.5" ry="9.8"/><ellipse cx="312.1" cy="36.9" rx="13.5" ry="7.8"/><ellipse cx="271.0" cy="37.8" rx="41.4" ry="6.7"/></g><g opacity="1"><ellipse cx="205.5" cy="70.9" rx="13.8" ry="12.3"/><ellipse cx="219.3" cy="69.0" rx="15.9" ry="14.5"/><ellipse cx="234.3" cy="65.6" rx="20.1" ry="18.2"/><ellipse cx="251.5" cy="62.2" rx="24.2" ry="22.0"/><ellipse cx="272.0" cy="65.6" rx="20.1" ry="18.2"/><ellipse cx="280.8" cy="69.0" rx="15.9" ry="14.5"/><ellipse cx="300.2" cy="70.9" rx="13.8" ry="12.3"/><ellipse cx="253.5" cy="72.3" rx="49.2" ry="10.6"/></g><g opacity="1"><ellipse cx="105.1" cy="54.2" rx="10.8" ry="5.3"/><ellipse cx="115.0" cy="51.7" rx="10.8" ry="8.1"/><ellipse cx="128.4" cy="51.7" rx="10.8" ry="8.1"/><ellipse cx="136.5" cy="54.2" rx="10.8" ry="5.3"/><ellipse cx="122.0" cy="54.8" rx="22.1" ry="4.6"/></g><g opacity="0.9"><ellipse cx="-1.5" cy="50.6" rx="10.8" ry="6.0"/><ellipse cx="2.0" cy="53.4" rx="5.5" ry="2.9"/></g><ellipse cx="18" cy="98" rx="24" ry="13"/><ellipse cx="50" cy="96" rx="30" ry="15"/><ellipse cx="82" cy="99" rx="18" ry="12"/><ellipse cx="62" cy="76" rx="26" ry="18"/><ellipse cx="78" cy="63" rx="13" ry="10"/><ellipse cx="42" cy="80" rx="13" ry="9"/><ellipse cx="128" cy="92" rx="13" ry="11"/><ellipse cx="155" cy="104" rx="20" ry="13"/><ellipse cx="192" cy="116" rx="30" ry="11"/><ellipse cx="152" cy="113" rx="30" ry="8"/><ellipse cx="90" cy="117" rx="33" ry="5.500" opacity=".92"/><g opacity="0.9"><ellipse cx="209.6" cy="89.0" rx="13.5" ry="5.5"/><ellipse cx="212.5" cy="91.6" rx="6.9" ry="2.6"/></g><g opacity="0.9"><ellipse cx="232.8" cy="89.5" rx="9.9" ry="5.0"/><ellipse cx="231.5" cy="91.8" rx="5.1" ry="2.4"/></g><g opacity="0.85"><ellipse cx="246.0" cy="92.8" rx="14.0" ry="3.5"/><ellipse cx="260.3" cy="92.8" rx="14.0" ry="3.5"/><ellipse cx="254.5" cy="93.8" rx="14.3" ry="2.4"/></g><g opacity="0.9"><ellipse cx="269.2" cy="102.5" rx="11.7" ry="3.8"/><ellipse cx="281.1" cy="102.5" rx="11.7" ry="3.8"/><ellipse cx="275.0" cy="103.6" rx="12.0" ry="2.6"/></g><g opacity="0.8"><ellipse cx="304.0" cy="94.8" rx="9.9" ry="3.5"/><ellipse cx="305.5" cy="96.5" rx="5.1" ry="1.7"/></g><g opacity="0.8"><ellipse cx="331.0" cy="97.5" rx="9.0" ry="2.8"/><ellipse cx="340.3" cy="97.5" rx="9.0" ry="2.8"/><ellipse cx="334.0" cy="98.2" rx="9.2" ry="1.9"/></g><g opacity="0.6"><ellipse cx="286.3" cy="109.5" rx="17.1" ry="2.8"/><ellipse cx="309.4" cy="109.5" rx="17.1" ry="2.8"/><ellipse cx="299.0" cy="110.2" rx="17.5" ry="1.9"/></g></g>
<g fill="#c9d3dd" opacity=".22" filter="url(#bl)"><ellipse cx="255" cy="30" rx="30" ry="6"/><ellipse cx="240" cy="76" rx="35" ry="4"/><ellipse cx="50" cy="108" rx="40" ry="3.500"/><ellipse cx="230" cy="14" rx="50" ry="4"/></g>
<rect y="158" width="349" height="104" fill="url(#sea)"/>
<ellipse cx="240" cy="188" rx="75" ry="30" fill="url(#glow)"/>
<rect y="168" width="349" height="94" filter="url(#wt)" opacity=".38"/>
<g filter="url(#bl2)">
<rect x="0" y="140" width="180" height="11" fill="#b4b9b9"/>
<rect x="0" y="142" width="60" height="10" fill="#a3b2b3"/>
<rect x="100" y="142" width="75" height="8" fill="#c2b2a8"/>
<rect x="0" y="149" width="176" height="18" fill="#5d8364"/>
<rect x="77" y="150" width="94" height="16" fill="#3f6b4a"/>
<rect x="0" y="148" width="17" height="12" fill="#3c6a52"/>
<rect x="0" y="158" width="18" height="20" fill="#2b8aa0"/>
<rect x="105" y="166" width="72" height="4" fill="#bfa98f"/>
<rect x="176" y="150" width="60" height="18" fill="#8f9a96"/>
<rect x="236" y="146" width="113" height="20" fill="#8b9296"/>
<rect x="250" y="150" width="60" height="12" fill="#6f7f8a"/>
<rect x="171" y="150" width="16" height="18" fill="#a39f93"/>
<rect x="200" y="152" width="40" height="9" fill="#5d7f8b"/>
<rect x="171" y="133" width="5" height="13" fill="#a9b3b9"/><rect x="170" y="134" width="6" height="33" fill="#9a9e9c"/><rect x="140" y="136" width="4" height="10" fill="#b9c2c8"/><rect x="188" y="135" width="6" height="15" fill="#b4b9bb"/><rect x="221.5" y="133" width="9.5" height="25" fill="#c9bca8"/><rect x="216" y="136" width="6" height="22" fill="#bfc3c4"/><rect x="233.7" y="132" width="13.1" height="29" fill="#b5a995"/><rect x="238.4" y="110.5" width="11.2" height="48.5" fill="#6e6a66"/><rect x="246" y="104" width="8" height="50" fill="#c9ccd0"/><rect x="234.5" y="124" width="4.0" height="10" fill="#66686c"/><rect x="256" y="126.4" width="17" height="25.6" fill="#2f618c"/><rect x="262" y="126.4" width="6" height="25.6" fill="#3f7cab"/><rect x="275.9" y="123.6" width="8.4" height="30.4" fill="#b7c6d3"/><rect x="279" y="116" width="4" height="10" fill="#c8cdd2"/><rect x="284.3" y="116" width="9.9" height="44" fill="#1f86a3"/><rect x="286" y="110" width="4" height="8" fill="#bdbab2"/><rect x="295.5" y="128" width="10.3" height="32" fill="#a9afb6"/><rect x="297.5" y="124" width="6.0" height="6" fill="#b9bec4"/><rect x="307.7" y="126.4" width="11.3" height="33.6" fill="#b3b0aa"/><rect x="313.3" y="132" width="20.7" height="29" fill="#8a8d8c"/><rect x="320.8" y="119" width="10.2" height="14" fill="#a19d97"/><rect x="333" y="142.3" width="10.3" height="19.7" fill="#6f7476"/><rect x="336" y="131" width="5" height="13" fill="#9a9d9f"/><rect x="344" y="126.4" width="5" height="31.6" fill="#7d848a"/><rect x="259" y="160" width="24.4" height="16" fill="#e4e2da"/><rect x="284" y="164" width="16" height="12" fill="#7f8b8f"/><rect x="321" y="161" width="18.5" height="16" fill="#b87458"/><rect x="339" y="158" width="10" height="18" fill="#c7a58f"/><rect x="300" y="160" width="22" height="10" fill="#97a08f"/>
<path d="M0 168h100l7 4v3l-60 6H0z" fill="#7d5b49"/>
<path d="M3 172h50v6H3z" fill="#9c7a62"/>
<path d="M16 167c2-8 6-11 12-12 2 4 3 8 4 12zM27 167c1-10 5-15 10-17 3 5 5 11 6 17zM38 167c3-14 9-22 17-25 6 7 10 16 12 25zM66 167c0-7 2-11 8-13 4 3 7 8 8 13zM85 167c2-4 6-7 11-7 2 2 3 5 4 7z" fill="#e9e3d6"/>
<path d="M20 167c2-5 4-8 8-9l2 9zM42 167c3-11 7-18 13-22l-3 22zM33 167c1-5 3-8 6-10l1 10z" fill="#8b7768"/>
<path d="M280 200c8-6 22-8 42-6l27 6v22c-25-4-50-10-69-20z" fill="#dcc77c"/>
<path d="M284 199c8-4 20-5 36-4l10 14c-18-1-34-4-46-10z" fill="#86b84a"/>
<path d="M302 190c10-4 30-4 47-2v16c-14 2-32-2-47-14z" fill="#3f7a3e"/>
<rect x="328" y="178" width="21" height="10" fill="#a9a7a0"/>
<path d="M322 206l27 6v10l-27-8z" fill="#c9b29a"/>
</g>
<g filter="url(#bl2)"><path d="M186 180l38-7 2 2-38 8z" fill="#e6f3f4"/><rect x="173" y="178" width="13" height="4.500" rx="1" fill="#f2f4f3"/>
<path d="M208 195l22-10 3 2-21 12z" fill="#d9ecec"/><rect x="197" y="192" width="12" height="8" rx="1" fill="#5a5a3e"/><rect x="199" y="191" width="7" height="4" fill="#c9b86a"/>
<path d="M37 230c5-4 13-4 19 0l-1 5H39z" fill="#f4f4f0"/><path d="M56 232l18 1v2l-18 1z" fill="#bfe0e0" opacity=".8"/>
<rect x="305" y="176" width="8" height="2" fill="#e8eef0"/>
</g>
<text x="87.200" y="64.600" font-family="Liberation Sans, sans-serif" font-weight="700" font-size="7.800" fill="#111">Sydney, Úc</text>
</svg>
<div class="abs ptxt" style="left:17px;top:363px"><span id="t_p1" style="letter-spacing:0.079px;">This is second row</span></div>
<div class="abs ptxt" style="left:27px;top:382px"><span id="t_p2" style="letter-spacing:0.181px;">1. This is the next row</span></div>
<div class="abs ptxt" style="left:27px;top:401px"><span id="t_p3" style="letter-spacing:0.094px;">2. next</span></div>
<div class="abs ptxt" style="left:27px;top:420px"><span id="t_p4" style="letter-spacing:0.207px;">3. the end</span></div>
<div class="abs" style="left:6px;top:487px;width:372px;height:1px;background:#eee"></div>
<div class="abs" style="left:27px;top:498px;width:4px;height:19px;background:#9a8cc9"></div>
<div class="abs" style="left:36px;top:498.500px;font-size:13px;line-height:20px;color:#9a8cc9;white-space:nowrap;letter-spacing:.3px"><span id="t_likes" style="letter-spacing:0.406px;">당신, Phuong Dofu 5 그리고 Trinh Nguyen 4</span></div>
<div class="abs" style="left:259px;top:492px;width:117px;height:50px;overflow:hidden">
 <div class="abs" style="left:37px;top:21px;width:80px;height:27px;border:1px solid #cfcfcf;border-radius:3px;background:#fafafa"></div>
 <div class="abs" style="left:69px;top:1px;width:60px;height:28px;border:1px solid #6b55b0;border-radius:3px;background:#fafafa"></div>
 <div class="abs" style="left:-20px;top:20px;width:51px;height:28px;border:1px solid #6b55b0;border-radius:3px;background:#fafafa"></div>
 <svg class="abs" style="left:75px;top:10px" width="13" height="12" viewBox="0 0 13 12"><path d="M6.500 11.500C3 8.500.5 6.500.5 3.800.5 2 1.900.6 3.600.6c1.200 0 2.300.7 2.900 1.700C7.100 1.300 8.200.6 9.400.6c1.700 0 3.100 1.400 3.100 3.200 0 2.700-2.500 4.700-6 7.700z" fill="#9a8cc9"/></svg>
 <div class="abs" style="left:92px;top:6px;font-size:13px;line-height:20px;font-weight:400;color:#777;white-space:nowrap;letter-spacing:.5px">3 좋</div>
 <div class="abs" style="left:0px;top:25px;font-size:13px;line-height:20px;font-weight:700;color:#808080;white-space:nowrap;letter-spacing:.5px">아요</div>
 <svg class="abs" style="left:43px;top:30px" width="13" height="11" viewBox="0 0 13 11"><path d="M6.500 1C9.500 1 12 2.700 12 4.900S9.500 8.800 6.500 8.800c-.6 0-1.200-.1-1.700-.2-.8.700-1.900 1.100-3 1.200.6-.5 1-1.200 1.100-2C1.700 7.100 1 6.100 1 4.900 1 2.700 3.500 1 6.500 1z" fill="none" stroke="#777" stroke-width="1"/></svg>
 <div class="abs" style="left:60px;top:25px;font-size:13px;line-height:20px;color:#777;white-space:nowrap"><span id="t_op" style="letter-spacing:0.468px;">2 의견글</span></div>
</div>
<svg class="abs" style="left:11px;top:561px" width="7" height="12" viewBox="0 0 7 12"><path d="M7 0L0 6l7 6z" fill="#efefef"/></svg>
<div class="abs" style="left:18px;top:549px;width:358px;height:44px;background:#efefef;border-radius:2px"></div>
<div class="abs" style="left:34px;top:560px;font-size:15px;line-height:22px;color:#777;white-space:nowrap;letter-spacing:.4px"><span id="t_cmt" style="letter-spacing:1.103px;">코멘트 쓰기...</span></div>
<div class="abs" style="left:18px;top:605px;width:358px;height:1px;background:#eee"></div>
<svg class="abs" style="left:21px;top:617px" width="30" height="36" viewBox="0 0 30 36"><ellipse cx="15" cy="15" rx="11" ry="8.500" fill="#f8f8f8" stroke="#f0f0f0"/><path d="M4.500 13c2-5.500 6-7 10.500-7s8.500 1.500 10.500 7c-3-2.500-6.500-3.500-10.500-3.500S7.500 10.500 4.500 13z" fill="#e6e6e6"/><rect x="9" y="25" width="12" height="6" fill="#f6f6f6"/></svg>
<div class="abs" style="left:63px;top:616px;font-size:13px;line-height:20px;color:#333;white-space:nowrap;letter-spacing:.2px"><b><span id="t_cname" style="letter-spacing:0.152px;">LE TRINH/Trinh Nguyen 4</span></b><span style="margin-left:9px"><span id="t_nice" style="letter-spacing:-0.200px;">Nice</span></span></div>
<div class="abs" style="left:63px;top:635px;font-size:13px;line-height:20px;color:#337ab7;white-space:nowrap"><span id="t_clike" style="letter-spacing:0.804px;">좋아요</span> <span style="color:#555;margin:0 2px 0 1px">-</span> <span style="color:#999;font-size:11px"><span id="t_cdate" style="letter-spacing:0.162px;">19/09/05 11:44</span></span><svg style="display:inline-block;vertical-align:-2px;margin:0 4px 0 10px" width="13" height="12" viewBox="0 0 13 12"><path d="M6.500 10.800C3.300 8.100 1.200 6.300 1.200 3.900 1.200 2.400 2.300 1.300 3.700 1.300c1.100 0 2.200.8 2.800 1.900.6-1.100 1.700-1.900 2.800-1.900 1.400 0 2.500 1.100 2.500 2.600 0 2.400-2.100 4.200-5.300 6.900z" fill="none" stroke="#337ab7" stroke-width="1.200"/></svg><span style="font-size:12px">1</span></div>
<svg class="abs" style="left:360px;top:644px" width="12" height="4" viewBox="0 0 12 4"><g fill="#3577b1"><circle cx="1.700" cy="2" r="1.500"/><circle cx="6" cy="2" r="1.500"/><circle cx="10.300" cy="2" r="1.500"/></g></svg>
<div class="abs" style="left:18px;top:669px;width:358px;height:1px;background:#eee"></div>
</div>
</div>
<div class="card" style="left:901px;top:65px;width:427px;height:416px">
<div class="chead" style="height:51px"><svg class="abs" style="left:14px;top:13px" width="22" height="21" viewBox="0 0 22 21"><ellipse cx="10.200" cy="5.400" rx="3.200" ry="4.500" fill="#5c62a8"/><path d="M1 17.500C1 13.500 4 11.800 7.500 10.800L9 9h2.500l1.300 1.800c1.700.4 3 1 3.700 1.700L10.500 18.500 9.500 17.500z" fill="#5c62a8"/><path d="M10.500 19.500L20 11" stroke="#fff" stroke-width="4.600" fill="none"/><path d="M11.600 18.500L20 11" stroke="#5c62a8" stroke-width="2.700" fill="none"/><path d="M9.800 20.300l.6-2.800 2.100 2.100z" fill="#555"/></svg><div class="ctitle" style="left:41.5px;top:10px;"><span id="t_ttlE" style="letter-spacing:0.500px;">업무</span></div><div class="sel">5</div><div class="vdiv" style="top:8px"></div><svg class="abs" style="left:321px;top:17px" width="100" height="18" viewBox="0 0 100 18"><g fill="#3577b1" stroke="none">
<path d="M8.500 1l2.500 2.900H9.300v2.800h2.800V5l2.900 2.500-2.900 2.500V8.300H9.300v2.800H11l-2.500 2.900L6 11.100h1.700V8.300H4.900V10L2 7.500 4.900 5v1.700h2.800V3.900H6z"/>
<path d="M29.600 11.400L35 6l5.400 5.400" fill="none" stroke="#3577b1" stroke-width="2.700"/>
<path d="M64.200 1.600v4.600h-4.600l1.700-1.700a3.700 3.700 0 0 0-6.300 1.400l-2-.6a5.800 5.800 0 0 1 9.800-2.300zM52.800 12.600V8h4.600l-1.700 1.700a3.700 3.700 0 0 0 6.300-1.400l2 .6a5.800 5.800 0 0 1-9.800 2.300z"/>
<path d="M77.300 4.600l6.400 6.400M83.700 4.600l-6.400 6.400" fill="none" stroke="#3577b1" stroke-width="2.800"/>
</g></svg></div>
<div class="tabline"></div>
<div class="tabs"><div class="tab on" style="width:78px"><span id="t_tabE1" style="letter-spacing:0.949px;">업무일지</span></div><div class="tab" style="width:77px"><span id="t_tabE2" style="letter-spacing:1.048px;">업무보고</span></div></div>
<div class="wi" style="top:110.0px"><div class="wn"><span id="t_wn0" style="letter-spacing:0.709px;">홍길동</span></div><div class="wd"><span id="t_wd0" style="letter-spacing:0.137px;">2018/07/31 14:19</span></div><div class="wl"><span id="t_wl0" style="letter-spacing:0.661px;">베트남 CRM 팀 일정 사항</span></div></div><div class="wsep" style="top:169px"></div><div class="wi" style="top:169.2px"><div class="wn"><span id="t_wn1" style="letter-spacing:0.709px;">홍길동</span></div><div class="wd"><span id="t_wd1" style="letter-spacing:0.137px;">2018/04/30 14:28</span></div><div class="wl"><span id="t_wl1" style="letter-spacing:0.772px;">CRM 업무내역 가져오기 - 내용 미포함</span></div></div><div class="wsep" style="top:228px"></div><div class="wi" style="top:228.4px"><div class="wn"><span id="t_wn2" style="letter-spacing:0.709px;">홍길동</span></div><div class="wd"><span id="t_wd2" style="letter-spacing:0.137px;">2018/04/30 14:28</span></div><div class="wl"><span id="t_wl2" style="letter-spacing:0.759px;">CRM 업무내역 가져오기 - 내용 포함</span></div></div><div class="wsep" style="top:287px"></div><div class="wi" style="top:287.6px"><div class="wn"><span id="t_wn3" style="letter-spacing:0.709px;">홍길동</span></div><div class="wd"><span id="t_wd3" style="letter-spacing:0.137px;">2017/10/26 15:54</span></div><div class="wl"><span id="t_wl3" style="letter-spacing:0.996px;">베트남 그룹웨어팀 업무 일정</span></div></div><div class="wsep" style="top:347px"></div><div class="wi" style="top:346.8px"><div class="wn"><span id="t_wn4" style="letter-spacing:0.709px;">홍길동</span></div><div class="wd"><span id="t_wd4" style="letter-spacing:0.137px;">2017/10/16 09:28</span></div><div class="wl"><span id="t_wl4" style="letter-spacing:0.662px;">9월 10일 업무일지</span></div></div>
</div>
<div class="card" style="left:901px;top:489px;width:427px;height:480px">
<div class="chead" style="height:51px"><svg class="abs" style="left:14px;top:16px" width="20" height="16" viewBox="0 0 21 17"><rect x=".5" y=".5" width="20" height="16" rx="1.500" fill="#f78a2c"/><path d="M1 1.500l9.500 8 9.500-8" fill="none" stroke="#fff" stroke-width="1.400"/><path d="M1 15.500l7-6.500M20 15.500l-7-6.500" fill="none" stroke="#fff" stroke-width="1.200"/></svg><div class="ctitle" style="left:39.2px;top:10px;"><span id="t_ttlF" style="letter-spacing:1.800px;">메일</span></div><div class="sel">10</div><div class="vdiv" style="top:8px"></div><svg class="abs" style="left:321px;top:17px" width="100" height="18" viewBox="0 0 100 18"><g fill="#3577b1" stroke="none">
<path d="M8.500 1l2.500 2.900H9.300v2.800h2.800V5l2.900 2.500-2.900 2.500V8.300H9.300v2.800H11l-2.500 2.900L6 11.100h1.700V8.300H4.900V10L2 7.500 4.900 5v1.700h2.800V3.900H6z"/>
<path d="M29.600 11.400L35 6l5.400 5.400" fill="none" stroke="#3577b1" stroke-width="2.700"/>
<path d="M64.200 1.600v4.600h-4.600l1.700-1.700a3.700 3.700 0 0 0-6.300 1.400l-2-.6a5.800 5.800 0 0 1 9.800-2.300zM52.800 12.600V8h4.600l-1.700 1.700a3.700 3.700 0 0 0 6.300-1.400l2 .6a5.800 5.800 0 0 1-9.800 2.300z"/>
<path d="M77.300 4.600l6.400 6.400M83.700 4.600l-6.400 6.400" fill="none" stroke="#3577b1" stroke-width="2.800"/>
</g></svg></div>
<div class="abs" style="left:15px;top:66px;width:396px;height:52px;background:#ececec;border-left:2px solid #dcdcdc;border-bottom:1px solid #e2e2e2"></div>
<div class="abs minfo" style="left:26px;top:74.500px"><span id="t_mi1" style="letter-spacing:0.584px;">수신거부 : <b>1</b></span><span class="msep"></span><span id="t_mi2" style="letter-spacing:0.732px;">화이트리스트관리 : <b>1215</b></span><span class="msep" style="margin-right:0"></span></div>
<div class="abs minfo" style="left:26px;top:94.500px"><span id="t_mi3" style="letter-spacing:0.717px;">스팸메일함 : <b>개인스팸DB사용하기</b></span></div>
<div class="wi" style="top:127.0px"><div class="wn mn"><span id="t_mn0" style="letter-spacing:-0.185px;">Customer Card</span></div><div class="wd"><span id="t_md0" style="letter-spacing:0.118px;">12/18 19:03</span></div><div class="wl ml"><span id="t_ml0" style="letter-spacing:0.106px;">Customer Card - Error</span></div></div><div class="wsep" style="top:186px"></div><div class="wi" style="top:186.3px"><div class="wn mn"><span id="t_mn1" style="letter-spacing:-0.185px;">Customer Card</span></div><div class="wd"><span id="t_md1" style="letter-spacing:0.118px;">12/18 19:00</span></div><div class="wl ml"><span id="t_ml1" style="letter-spacing:0.106px;">Customer Card - Error</span></div></div><div class="wsep" style="top:245px"></div><div class="wi" style="top:245.6px"><div class="wn mn"><span id="t_mn2" style="letter-spacing:-0.185px;">Customer Card</span></div><div class="wd"><span id="t_md2" style="letter-spacing:0.118px;">12/18 18:59</span></div><div class="wl ml"><span id="t_ml2" style="letter-spacing:0.106px;">Customer Card - Error</span></div></div><div class="wsep" style="top:305px"></div><div class="wi" style="top:304.9px"><div class="wn mn"><span id="t_mn3" style="letter-spacing:-0.185px;">Customer Card</span></div><div class="wd"><span id="t_md3" style="letter-spacing:0.118px;">12/18 18:59</span></div><div class="wl ml"><span id="t_ml3" style="letter-spacing:0.106px;">Customer Card - Error</span></div></div><div class="wsep" style="top:364px"></div><div class="wi" style="top:364.2px"><div class="wn mn"><span id="t_mn4" style="letter-spacing:-0.185px;">Customer Card</span></div><div class="wd"><span id="t_md4" style="letter-spacing:0.118px;">12/18 18:58</span></div><div class="wl ml"><span id="t_ml4" style="letter-spacing:0.106px;">Customer Card - Error</span></div></div><div class="wsep" style="top:423px"></div><div class="wi" style="top:423.5px"><div class="wn mn"><span id="t_mn5" style="letter-spacing:-0.185px;">Customer Card</span></div><div class="wd"><span id="t_md5" style="letter-spacing:0.118px;">12/18 18:58</span></div><div class="wl ml"><span id="t_ml5" style="letter-spacing:0.106px;">Customer Card - Error</span></div></div><div class="wsep" style="top:482px"></div>
</div>
</body>
</html>
